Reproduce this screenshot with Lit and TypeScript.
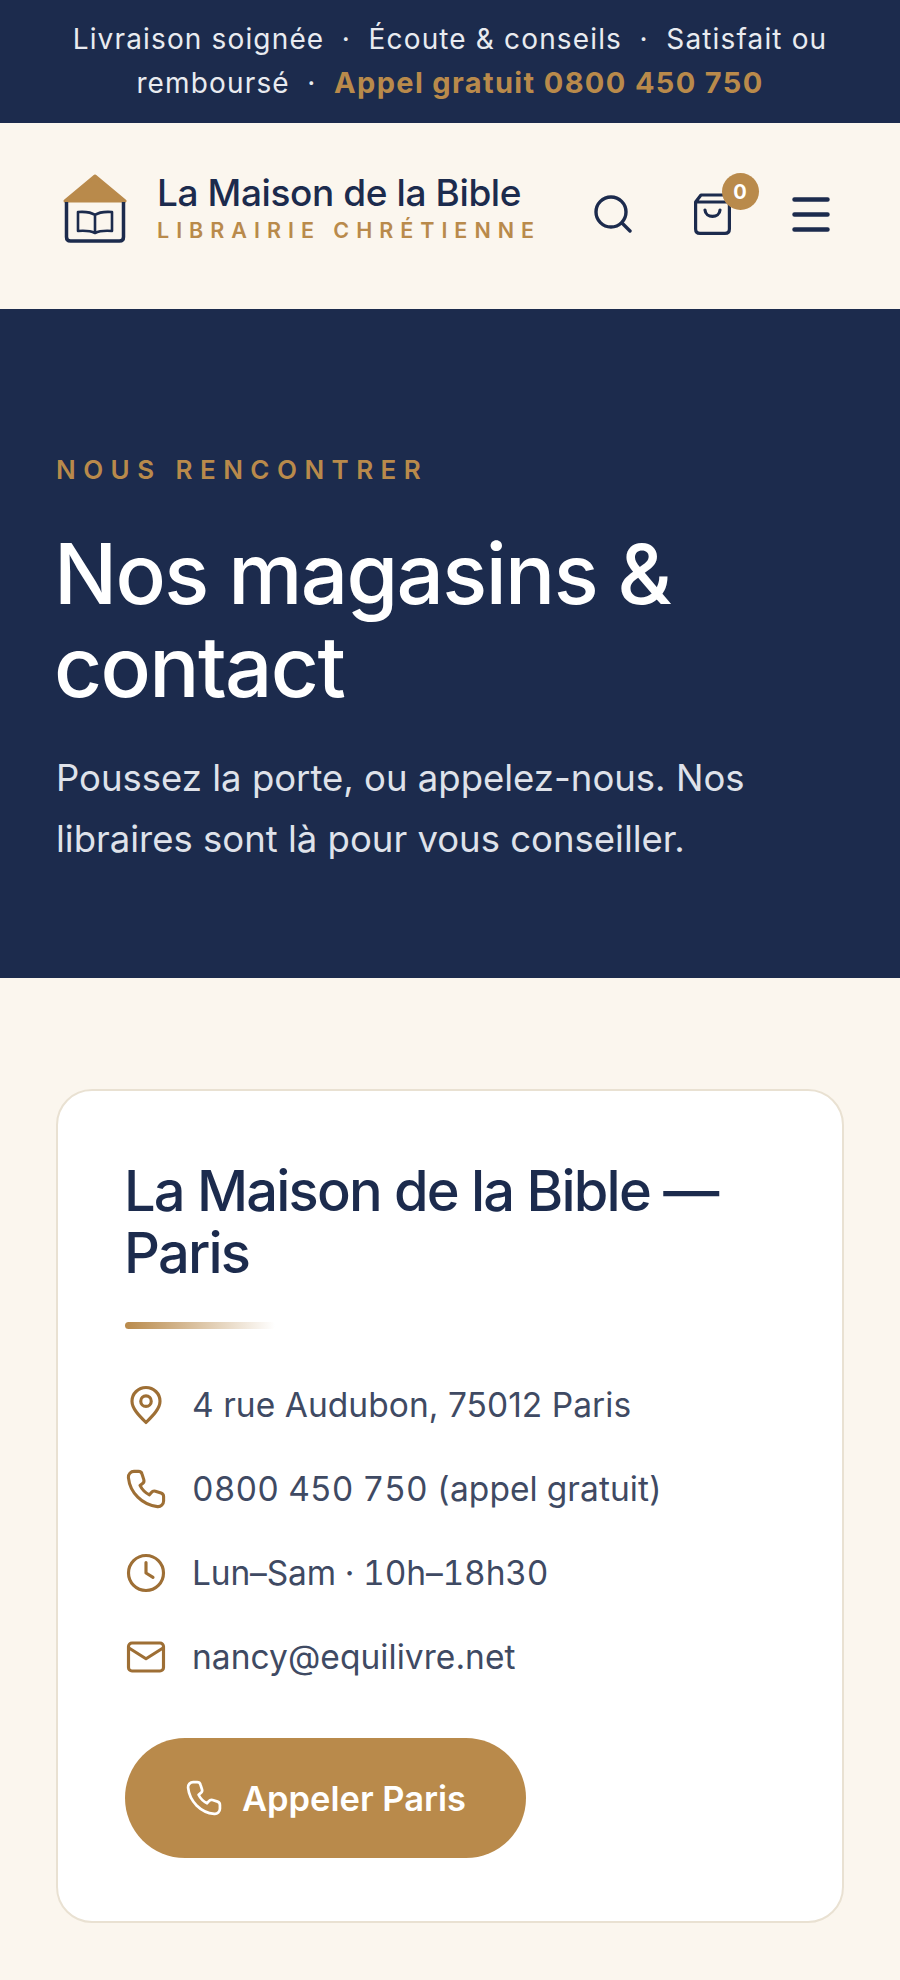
import { LitElement, html, css, svg } from "lit";
import { customElement } from "lit/decorators.js";

const phone = svg`<path d="M8.2 3.2 L6 3.2 C4.4 3.2 3 4.6 3.2 6.3 C4 13.9 10.1 20 17.7 20.8 C19.4 21 20.8 19.6 20.8 18 L20.8 15.8 C20.8 15 20.3 14.3 19.5 14 L16.7 13.1 C16 12.9 15.2 13.1 14.7 13.7 L13.7 14.9 C11.6 13.9 10 12.2 9 10.2 L10.3 9.2 C10.9 8.8 11.1 8 10.9 7.3 L10 4.5 C9.8 3.7 9 3.2 8.2 3.2 Z"/>`;

@customElement("app-root")
export class AppRoot extends LitElement {
  static styles = css`
    :host { display: block; width: 900px; height: 1980px; overflow: hidden; background: #fbf6ee; font-family: Inter, "Liberation Sans", sans-serif; }
    .top { background: #1c2b4d; color: #e9ebf0; text-align: center; font-size: 28px; line-height: 43px; letter-spacing: 1.15px; padding: 18px 40px 17px; height: 123px; box-sizing: border-box; }
    .top .dot { margin: 0 17.5px; }
    .top b { color: #b98a4b; font-weight: 700; font-size: 29px; letter-spacing: 1.35px; }
    .head { height: 186px; box-sizing: border-box; display: flex; align-items: center; padding: 0 70px 4px 63px; }
    .logo { width: 64px; height: 69px; flex: none; margin-top: -11px; }
    .brand { margin-left: 30px; flex: 1; display: flex; flex-direction: column; gap: 3px; margin-top: -14px; }
    .brand .n { font-size: 37px; line-height: 42px; font-weight: 500; color: #1c2b4d; letter-spacing: -0.4px; }
    .brand .s { font-size: 21.5px; line-height: 26px; font-weight: 600; color: #b98a4b; letter-spacing: 7px; white-space: nowrap; }
    .ic { display: block; fill: none; stroke: #1c2b4d; stroke-linecap: round; stroke-linejoin: round; }
    .actions { display: flex; align-items: center; gap: 61.5px; }
    .cart { position: relative; width: 37px; height: 42px; }
    .badge { position: absolute; left: 28px; top: -20px; width: 37px; height: 37px; border-radius: 50%; background: #b98a4b; color: #fff; font-size: 20px; font-weight: 700; display: flex; align-items: center; justify-content: center; }
    .hero { height: 669px; box-sizing: border-box; background: #1c2b4d; padding: 145px 56px 0; }
    .eye { font-size: 26px; line-height: 32px; font-weight: 600; letter-spacing: 7.45px; color: #b98a4b; }
    h1 { margin: 41px 0 0 -2px; font-size: 83.5px; line-height: 93px; font-weight: 500; color: #fff; letter-spacing: -1.65px; }
    .hero p { margin: 35px 0 0; font-size: 36.5px; line-height: 61px; color: #dfe2ea; }
    .main { padding: 111px 56px 0; }
    .card { background: #fff; border: 2px solid #e9e1d2; border-radius: 36px; padding: 69px 67px 65px; height: 834px; box-sizing: border-box; }
    h2 { margin: 0 0 0 -1px; font-size: 56px; line-height: 62px; font-weight: 500; color: #1c2b4d; letter-spacing: -1.8px; }
    .rule { width: 150px; height: 7px; border-radius: 4px; background: linear-gradient(90deg, #b98a4b, rgba(185,138,75,0)); margin-top: 38px; }
    .list { margin-top: 48px; display: flex; flex-direction: column; gap: 29px; }
    .row { display: flex; align-items: center; gap: 25px; height: 55px; font-size: 33.5px; color: #3f4a63; letter-spacing: 0.05px; }
    .row.num { font-variant-numeric: tabular-nums; }
    .row.hours { font-variant-numeric: tabular-nums; letter-spacing: -0.15px; }
    .row .ic { stroke: #9e6f35; flex: none; }
    .btn { margin-top: 54px; width: 401px; height: 120px; border-radius: 60px; background: #b98a4b; color: #fff; font-size: 34.5px; font-weight: 600; display: flex; align-items: center; justify-content: center; gap: 19px; }
    .btn .ic { stroke: #fff; }
  `;

  render() {
    return html`
      <div class="top">Livraison soignée<span class="dot">·</span>Écoute &amp; conseils<span class="dot">·</span>Satisfait ou remboursé<span class="dot">·</span><b>Appel gratuit 0800 450 750</b></div>
      <header class="head">
        <svg class="logo" viewBox="0 0 64 69" aria-hidden="true">
          <path d="M32 2 L62 27 L2 27 Z" fill="#b98a4b" stroke="#b98a4b" stroke-width="3" stroke-linejoin="round"/>
          <path d="M3.500 28 L3.500 63 Q3.500 67 7.500 67 L56.500 67 Q60.500 67 60.500 63 L60.500 28" fill="none" stroke="#1c2b4d" stroke-width="3.500"/>
          <path d="M32 41 C28 38 22 37.500 15 38 L15 57 C22 56.500 28 57 32 59 C36 57 42 56.500 49 57 L49 38 C42 37.500 36 38 32 41 Z M32 41 L32 59" fill="none" stroke="#1c2b4d" stroke-width="2.600" stroke-linejoin="round"/>
        </svg>
        <div class="brand"><span class="n">La Maison de la Bible</span><span class="s">LIBRAIRIE CHRÉTIENNE</span></div>
        <div class="actions">
          <svg class="ic" width="38" height="38" viewBox="0 0 38 38" stroke-width="3.400"><circle cx="17" cy="17" r="15"/><path d="M28 28 L36 36"/></svg>
          <div class="cart">
            <svg class="ic" width="37" height="42" viewBox="0 0 37 42" stroke-width="3.200"><path d="M7 2 L30 2 L35.400 9 L35.400 36 Q35.400 40.400 31 40.400 L6 40.400 Q1.600 40.400 1.600 36 L1.600 9 Z M1.600 9 L35.400 9"/><path d="M11 17 C11.500 25.500 25.500 25.500 26 17"/></svg>
            <span class="badge">0</span>
          </div>
          <svg class="ic" width="38" height="35" viewBox="0 0 38 35" stroke-width="4.500"><path d="M2.500 2.500 L35.500 2.500 M2.500 17.500 L35.500 17.500 M2.500 32.500 L35.500 32.500"/></svg>
        </div>
      </header>
      <section class="hero">
        <div class="eye">NOUS RENCONTRER</div>
        <h1>Nos magasins &amp; contact</h1>
        <p>Poussez la porte, ou appelez-nous. Nos libraires sont là pour vous conseiller.</p>
      </section>
      <div class="main">
        <article class="card">
          <h2>La Maison de la Bible — Paris</h2>
          <div class="rule"></div>
          <div class="list">
            <div class="row"><svg class="ic" width="42" height="42" viewBox="0 0 24 24" stroke-width="1.800"><path d="M12 22 C8 18 4 14 4 9.800 C4 5.500 7.600 2 12 2 C16.400 2 20 5.500 20 9.800 C20 14 16 18 12 22 Z"/><circle cx="12" cy="9.800" r="3"/></svg>4 rue Audubon, 75012 Paris</div>
            <div class="row num"><svg class="ic" width="42" height="42" viewBox="1.500 1.500 21 21" stroke-width="1.550">${phone}</svg>0800 450 750 (appel gratuit)</div>
            <div class="row hours"><svg class="ic" width="42" height="42" viewBox="0 0 24 24" stroke-width="1.800"><circle cx="12" cy="12" r="10"/><path d="M12 6 L12 12 L16 14.500"/></svg>Lun–Sam · 10h–18h30</div>
            <div class="row"><svg class="ic" width="42" height="42" viewBox="0 0 24 24" stroke-width="1.800"><rect x="2" y="4" width="20" height="16" rx="2"/><path d="M2.500 7 L12 13 L21.500 7"/></svg>nancy@equilivre.net</div>
          </div>
          <div class="btn"><svg class="ic" width="38" height="38" viewBox="1.500 1.500 21 21" stroke-width="1.500">${phone}</svg>Appeler Paris</div>
        </article>
      </div>
    `;
  }
}
